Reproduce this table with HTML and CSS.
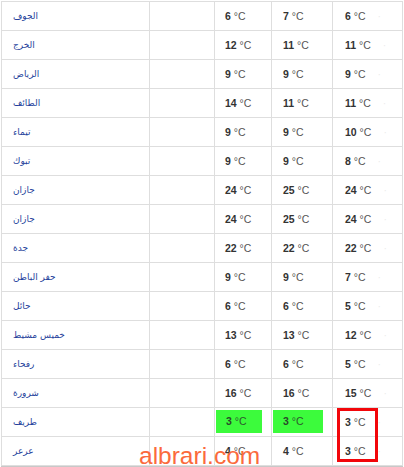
FILE: index.html
```html
<!DOCTYPE html>
<html lang="ar">
<head>
<meta charset="utf-8">
<link rel="stylesheet" href="styles.css">
</head>
<body>
<div class="wrap">
  <div class="grid">
    <div class="city">الجوف</div><div></div><div class="t c3"><b>6</b> °C</div><div class="t c4"><b>7</b> °C</div><div class="t c5"><b>6</b> °C<span class="f">·</span></div>
    <div class="city">الخرج</div><div></div><div class="t c3"><b>12</b> °C</div><div class="t c4"><b>11</b> °C</div><div class="t c5"><b>11</b> °C<span class="f">·</span></div>
    <div class="city">الرياض</div><div></div><div class="t c3"><b>9</b> °C</div><div class="t c4"><b>9</b> °C</div><div class="t c5"><b>9</b> °C<span class="f">·</span></div>
    <div class="city">الطائف</div><div></div><div class="t c3"><b>14</b> °C</div><div class="t c4"><b>11</b> °C</div><div class="t c5"><b>11</b> °C<span class="f">·</span></div>
    <div class="city">تيماء</div><div></div><div class="t c3"><b>9</b> °C</div><div class="t c4"><b>9</b> °C</div><div class="t c5"><b>10</b> °C<span class="f">·</span></div>
    <div class="city">تبوك</div><div></div><div class="t c3"><b>9</b> °C</div><div class="t c4"><b>9</b> °C</div><div class="t c5"><b>8</b> °C<span class="f">·</span></div>
    <div class="city">جازان</div><div></div><div class="t c3"><b>24</b> °C</div><div class="t c4"><b>25</b> °C</div><div class="t c5"><b>24</b> °C<span class="f">·</span></div>
    <div class="city">جازان</div><div></div><div class="t c3"><b>24</b> °C</div><div class="t c4"><b>25</b> °C</div><div class="t c5"><b>24</b> °C<span class="f">·</span></div>
    <div class="city">جدة</div><div></div><div class="t c3"><b>22</b> °C</div><div class="t c4"><b>22</b> °C</div><div class="t c5"><b>22</b> °C<span class="f">·</span></div>
    <div class="city">حفر الباطن</div><div></div><div class="t c3"><b>9</b> °C</div><div class="t c4"><b>9</b> °C</div><div class="t c5"><b>7</b> °C<span class="f">·</span></div>
    <div class="city">حائل</div><div></div><div class="t c3"><b>6</b> °C</div><div class="t c4"><b>6</b> °C</div><div class="t c5"><b>5</b> °C<span class="f">·</span></div>
    <div class="city">خميس مشيط</div><div></div><div class="t c3"><b>13</b> °C</div><div class="t c4"><b>13</b> °C</div><div class="t c5"><b>12</b> °C<span class="f">·</span></div>
    <div class="city">رفحاء</div><div></div><div class="t c3"><b>6</b> °C</div><div class="t c4"><b>6</b> °C</div><div class="t c5"><b>5</b> °C<span class="f">·</span></div>
    <div class="city">شرورة</div><div></div><div class="t c3"><b>16</b> °C</div><div class="t c4"><b>16</b> °C</div><div class="t c5"><b>15</b> °C<span class="f">·</span></div>
    <div class="city">طريف</div><div></div><div class="t hlcell"><span class="hl"><b>3</b> °C</span></div><div class="t hlcell"><span class="hl"><b>3</b> °C</span></div><div class="t c5"><b>3</b> °C<span class="f">·</span></div>
    <div class="city">عرعر</div><div></div><div class="t c3"><b>4</b> °C</div><div class="t c4"><b>4</b> °C</div><div class="t c5"><b>3</b> °C<span class="f">·</span></div>
  </div>
  <div class="redbox"></div>
  <div class="mark">albrari.com</div>
</div>
</body>
</html>
```

FILE: styles.css
```css
html, body {
  margin: 0;
  padding: 0;
  background: #fff;
}
body {
  width: 404px;
  height: 467px;
  overflow: hidden;
}
.wrap {
  position: relative;
  padding: 1px 0 0 1px;
}
.grid {
  display: grid;
  grid-template-columns: 147px 64px 56px 60px 69px;
  grid-auto-rows: 28px;
  gap: 1px;
  padding: 1px;
  width: max-content;
  background: #dedede;
  border-bottom: 1px solid #c8c8c8;
  margin-bottom: -1px;
}
.grid > div {
  background: #fff;
  line-height: 28px;
  white-space: nowrap;
}
.city {
  padding-left: 11px;
  font-family: "DejaVu Sans", sans-serif;
  font-size: 9px;
  color: #253f9b;
}
.t {
  font-family: "Liberation Sans", Arial, sans-serif;
  font-size: 10.5px;
  color: #555;
}
.t b {
  color: #333;
}
.c3 { padding-left: 10px; }
.c4 { padding-left: 11px; }
.c5 { padding-left: 12px; }
.f {
  color: #ececec;
  margin-left: 12px;
}
.grid > .hlcell {
  padding: 2px 9px 3px 1px;
}
.hl {
  display: block;
  height: 23px;
  line-height: 23px;
  padding-left: 10px;
  background: #3cfb3c;
  color: #2d5a2d;
}
.hl b {
  color: #2a4a2a;
}
.redbox {
  position: absolute;
  left: 337px;
  top: 408px;
  width: 35px;
  height: 48px;
  border: 3px solid #f2060a;
}
.mark {
  position: absolute;
  left: 139px;
  top: 446px;
  font-family: "Liberation Sans", Arial, sans-serif;
  font-size: 24.5px;
  line-height: 20px;
  color: #fb6a3c;
}
```
